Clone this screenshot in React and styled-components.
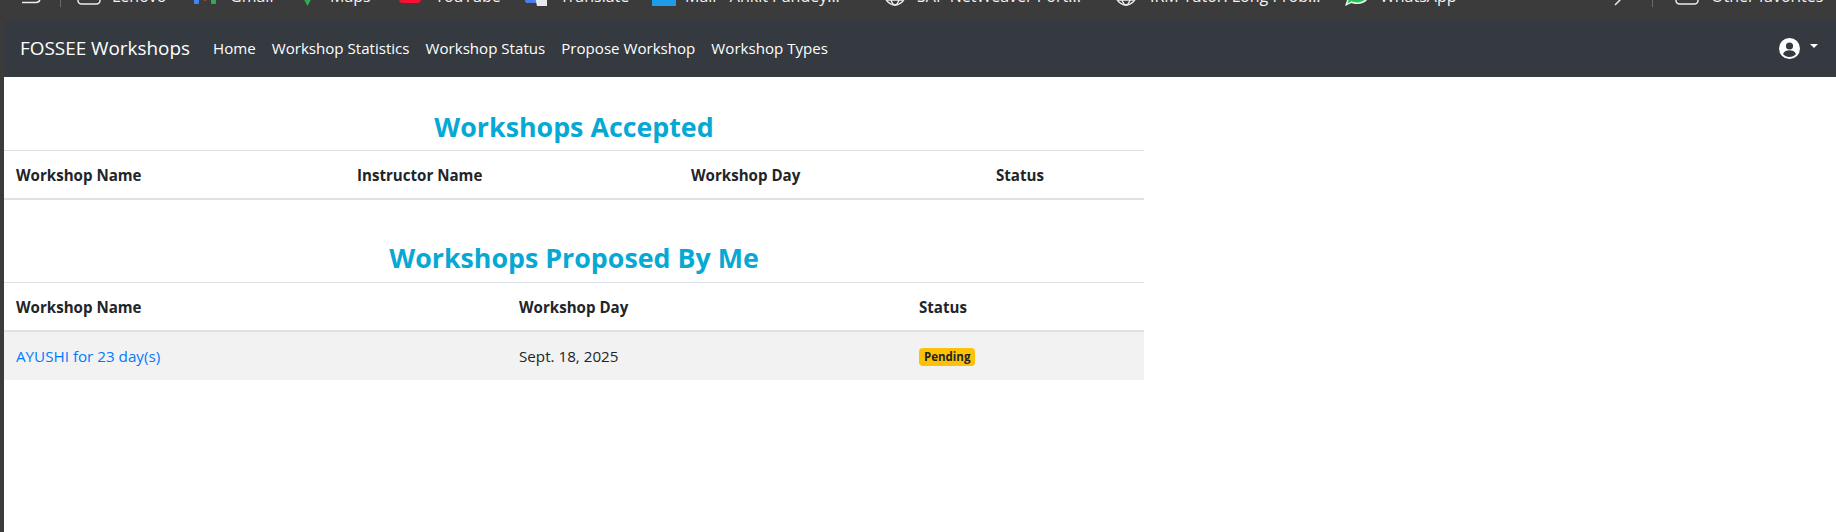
import React from 'react'
import styled, { createGlobalStyle } from 'styled-components'

const GlobalStyle = createGlobalStyle`
  html, body {
    margin: 0;
    padding: 0;
    background: #3b3b3b;
    height: 100%;
    overflow: hidden;
  }
  #root { height: 100%; }
`

const FONT = `"Open Sans", "Noto Sans", "Liberation Sans", sans-serif`

function Globe() {
  return (
    <svg width="22" height="22" viewBox="0 0 22 22" fill="none" stroke="#ececec" strokeWidth="1.4">
      <circle cx="11" cy="11" r="10" />
      <ellipse cx="11" cy="11" rx="4.5" ry="10" />
      <path d="M1 11h20M2.5 16h17" />
    </svg>
  )
}

function Folder() {
  return (
    <svg width="24" height="20" viewBox="0 0 24 20" fill="none" stroke="#ececec" strokeWidth="1.5">
      <rect x="1" y="1" width="22" height="17" rx="3.5" />
    </svg>
  )
}

function TabIcon() {
  return (
    <svg width="20" height="20" viewBox="0 0 20 20" fill="none" stroke="#ececec" strokeWidth="1.5">
      <path d="M1 1h18v11c0 3-2 4.500-4 4.500H1" />
    </svg>
  )
}

function GmailIcon() {
  return (
    <svg width="22" height="21" viewBox="0 0 22 21">
      <rect x="0" y="2" width="5" height="17" rx="1" fill="#4285f4" />
      <rect x="17" y="2" width="5" height="17" rx="1" fill="#34a853" />
      <path d="M0 3l11 8 11-8v5l-11 8-11-8z" fill="#ea4335" />
    </svg>
  )
}

function MapsIcon() {
  return (
    <svg width="11" height="20" viewBox="0 0 11 20">
      <path d="M5.500 20L0 10V0h11v10z" fill="#34a853" />
    </svg>
  )
}

function YoutubeIcon() {
  return (
    <svg width="22" height="18" viewBox="0 0 22 18">
      <rect width="22" height="15" y="0" rx="4" fill="#fa0f33" />
    </svg>
  )
}

function TranslateIcon() {
  return (
    <svg width="22" height="20" viewBox="0 0 22 20">
      <rect width="15" height="17" rx="2" fill="#4a7de8" />
      <path d="M9 6h13v14H12z" fill="#e6e9ef" />
    </svg>
  )
}

function MailIcon() {
  return (
    <svg width="24" height="20" viewBox="0 0 24 20">
      <rect width="24" height="20" fill="#1f9be8" />
      <rect width="16" height="14" rx="1" fill="#0f5fb8" />
    </svg>
  )
}

function WhatsappIcon() {
  return (
    <svg width="24" height="20" viewBox="0 0 24 20">
      <path d="M12 0c8 0 12 4 12 9s-5 9-12 9c-2 0-4-.3-5.500-1L0 20l2-6C0.500 12 0 10.500 0 9c0-5 4-9 12-9z" fill="#e9f7ee" />
      <path d="M12 1.500c6.500 0 10.500 3.500 10.500 7.500S17.500 16.500 12 16.500c-2 0-4-.5-5.500-1.200L2.500 17.500l1.200-4C2.300 12 1.500 10.500 1.500 9c0-4 4-7.500 10.500-7.500z" fill="#25c255" />
    </svg>
  )
}

function UserIcon() {
  return (
    <svg width="21" height="21" viewBox="0 0 20 20">
      <circle cx="10" cy="10" r="10" fill="#fff" />
      <circle cx="10" cy="7.600" r="3.400" fill="#343a40" />
      <path d="M3.800 15.200c1.200-2.600 3.400-3.600 6.200-3.600s5 1 6.200 3.600c-1.500 1.800-3.700 2.900-6.200 2.900s-4.700-1.100-6.200-2.900z" fill="#343a40" />
    </svg>
  )
}

function App() {
  return (
    <Page>
      <GlobalStyle />
      <Bookmarks>
        <Mark $w={39}><TabIcon /></Mark>
        <Divider $after={16} />
        <Mark $w={117} $gap={11}><Folder /><MarkText>Lenovo</MarkText></Mark>
        <Mark $w={108} $gap={14}><GmailIcon /><MarkText>Gmail</MarkText></Mark>
        <Mark $w={97} $gap={17}><MapsIcon /><MarkText>Maps</MarkText></Mark>
        <Mark $w={126} $gap={14}><YoutubeIcon /><MarkText>YouTube</MarkText></Mark>
        <Mark $w={127} $gap={13}><TranslateIcon /><MarkText>Translate</MarkText></Mark>
        <Mark $w={232} $gap={9}><MailIcon /><MarkText>Mail - Ankit Pandey...</MarkText></Mark>
        <Mark $w={231} $gap={11}><Globe /><MarkText>SAP NetWeaver Port...</MarkText></Mark>
        <Mark $w={230} $gap={13}><Globe /><MarkText>IRM Tutor: Long Prob...</MarkText></Mark>
        <Mark $w={269} $gap={11}><WhatsappIcon /><MarkText>WhatsApp</MarkText></Mark>
        <Mark $w={38}>
          <svg width="7" height="12" viewBox="0 0 7 12" fill="none" stroke="#ececec" strokeWidth="1.500">
            <path d="M1 1l5 5-5 5" />
          </svg>
        </Mark>
        <Divider $after={22} />
        <Mark $gap={12}><Folder /><MarkText>Other favorites</MarkText></Mark>
      </Bookmarks>
      <Navbar>
        <Brand>FOSSEE Workshops</Brand>
        <NavLink>Home</NavLink>
        <NavLink>Workshop Statistics</NavLink>
        <NavLink>Workshop Status</NavLink>
        <NavLink>Propose Workshop</NavLink>
        <NavLink>Workshop Types</NavLink>
        <Spacer />
        <UserIcon />
        <Caret />
      </Navbar>
      <Body>
        <Content>
          <Heading>Workshops Accepted</Heading>
          <Table $cols="341px 334px 305px 1fr">
            <Head>Workshop Name</Head>
            <Head>Instructor Name</Head>
            <Head>Workshop Day</Head>
            <Head>Status</Head>
          </Table>
          <Heading $second>Workshops Proposed By Me</Heading>
          <Table $cols="503px 400px 1fr">
            <Head>Workshop Name</Head>
            <Head>Workshop Day</Head>
            <Head>Status</Head>
            <Cell><CellLink>AYUSHI for 23 day(s)</CellLink></Cell>
            <Cell>Sept. 18, 2025</Cell>
            <Cell><Badge>Pending</Badge></Cell>
          </Table>
        </Content>
      </Body>
    </Page>
  )
}

export default App

const Page = styled.div`
  height: 100%;
  display: flex;
  flex-direction: column;
  font-family: ${FONT};
`
const Bookmarks = styled.div`
  height: 19px;
  flex: none;
  display: flex;
  align-items: flex-start;
  padding-left: 21px;
  overflow: hidden;
  background: #3b3b3b;
  box-sizing: border-box;
`
const Mark = styled.div`
  display: flex;
  align-items: flex-end;
  gap: ${p => p.$gap || 0}px;
  flex: none;
  width: ${p => (p.$w ? `${p.$w}px` : 'auto')};
  height: 24px;
  margin-top: -18px;
`
const MarkText = styled.span`
  color: #f4f4f4;
  font-size: 16px;
  line-height: 20px;
  white-space: nowrap;
`
const Divider = styled.span`
  flex: none;
  width: 1px;
  height: 7px;
  margin-right: ${p => p.$after}px;
  background: #6a6a6a;
`
const Spacer = styled.div`
  flex: 1;
`
const Navbar = styled.nav`
  height: 58px;
  flex: none;
  margin-left: 4px;
  box-sizing: border-box;
  background: #343a40;
  border-top-left-radius: 8px;
  display: flex;
  align-items: center;
  padding: 0 18px 0 16px;
`
const Brand = styled.a`
  color: #fff;
  font-size: 18.900px;
  margin-right: 15px;
`
const NavLink = styled.a`
  color: #fff;
  font-size: 15.100px;
  padding: 0 8px;
`
const Caret = styled.span`
  margin-left: 10px;
  margin-bottom: 4px;
  border-top: 4px solid #fff;
  border-left: 4px solid transparent;
  border-right: 4px solid transparent;
`
const Body = styled.div`
  flex: 1;
  margin-left: 4px;
  background: #fff;
`
const Content = styled.main`
  width: 1140px;
`
const Heading = styled.h3`
  margin: ${p => (p.$second ? '42px 0 0' : '34px 0 0')};
  height: ${p => (p.$second ? '40px' : '39px')};
  font-size: 26.800px;
  line-height: 31px;
  font-weight: 700;
  color: #06a8d4;
  text-align: center;
`
const Table = styled.div`
  display: grid;
  grid-template-columns: ${p => p.$cols};
  border-top: 1px solid #dee2e6;
`
const Head = styled.div`
  height: 49px;
  box-sizing: border-box;
  display: flex;
  align-items: center;
  padding-left: 12px;
  font-size: 15.100px;
  font-weight: 700;
  color: #212529;
  border-bottom: 2px solid #dee2e6;
`
const Cell = styled.div`
  height: 48px;
  box-sizing: border-box;
  display: flex;
  align-items: center;
  padding-left: 12px;
  font-size: 15.200px;
  color: #212529;
  background: #f2f2f2;
`
const CellLink = styled.a`
  color: #007bff;
`
const Badge = styled.span`
  margin-top: 2px;
  background: #ffc107;
  color: #212529;
  font-size: 11.500px;
  line-height: 14px;
  font-weight: 700;
  padding: 2px 5px;
  border-radius: 4px;
`
